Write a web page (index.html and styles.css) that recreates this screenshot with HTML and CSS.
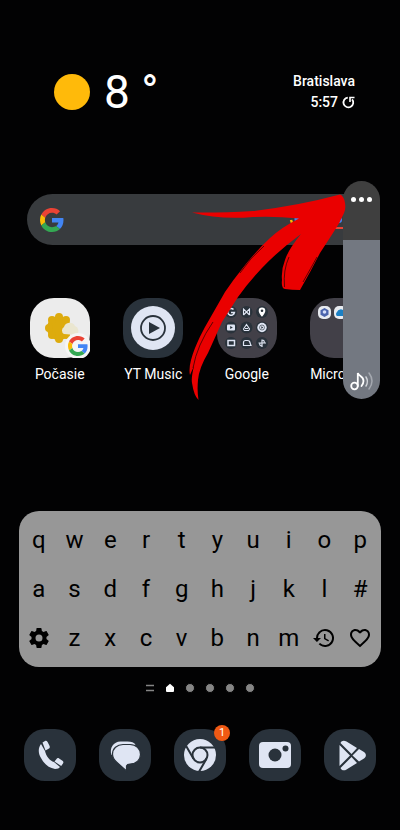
FILE: index.html
```
<!DOCTYPE html>
<html lang="sk">
<head>
    <meta charset="UTF-8">
    <meta name="viewport" content="width=device-width, initial-scale=1.0">
    <title>Domovská obrazovka</title>
    <link rel="stylesheet" href="styles.css">
</head>
<body>

<!-- Shared logo -->
<svg class="defs" width="0" height="0" aria-hidden="true">
    <symbol id="g-logo" viewBox="0 0 48 48">
        <path fill="#ea4335" d="M24 9.5c3.54 0 6.71 1.22 9.21 3.6l6.85-6.85C35.9 2.38 30.47 0 24 0 14.62 0 6.51 5.38 2.56 13.22l7.98 6.19C12.43 13.72 17.74 9.5 24 9.5z"/>
        <path fill="#4285f4" d="M46.98 24.55c0-1.57-.15-3.09-.38-4.55H24v9.02h12.94c-.58 2.96-2.26 5.48-4.78 7.18l7.73 6c4.51-4.18 7.09-10.36 7.09-17.65z"/>
        <path fill="#fbbc05" d="M10.53 28.59A14.5 14.5 0 0 1 9.77 24c0-1.6.27-3.14.76-4.59l-7.98-6.19A23.9 23.9 0 0 0 0 24c0 3.88.92 7.54 2.56 10.78l7.97-6.19z"/>
        <path fill="#34a853" d="M24 48c6.48 0 11.93-2.13 15.89-5.81l-7.73-6C30.01 37.64 27.24 38.5 24 38.5c-6.26 0-11.57-4.22-13.47-9.91l-7.98 6.19C6.51 42.62 14.62 48 24 48z"/>
    </symbol>
</svg>

<main class="home">
    <!-- Weather and clock -->
    <header class="weather">
        <span class="sun"></span>
        <span class="temp">8 °</span>
        <div class="place">
            <div>Bratislava</div>
            <div class="time">5:57
                <button class="refresh" aria-label="Obnoviť">
                    <svg viewBox="0 0 13 13" width="13" height="13" fill="none" stroke="#fff" stroke-width="1.8"><path d="M5.8 1.6a4.9 4.9 0 1 0 4.300 1.700"/><path d="M8 6V1.500M7.200 1.500H12.500" stroke-width="1.6"/></svg>
                </button>
            </div>
        </div>
    </header>

    <!-- Search bar -->
    <form class="search">
        <svg width="24" height="24"><use href="#g-logo"/></svg>
        <input type="text" aria-label="Hľadať">
        <button type="button" aria-label="Hlasové vyhľadávanie">
            <svg viewBox="0 0 24 24" width="24" height="24" fill="none" stroke-width="2.4">
                <rect x="9.5" y="5" width="5" height="9" rx="2.5" fill="#4285f4"/>
                <path d="M6 12a6 6 0 0 0 3 4.5" stroke="#fbbc05"/>
                <path d="M9 16.500A6.500 6.500 0 0 0 18 12" stroke="#ea4335"/>
                <path d="M12 18v3.500" stroke="#34a853"/>
            </svg>
        </button>
        <button type="button" aria-label="Vyhľadávanie obrázkom">
            <svg viewBox="0 0 24 24" width="24" height="24" fill="none" stroke-width="2">
                <path d="M3 10V7a3 3 0 0 1 3-3h4" stroke="#4285f4"/>
                <path d="M3 14v3a3 3 0 0 0 3 3h9" stroke="#ea4335"/>
                <circle cx="10" cy="12" r="3" fill="#4285f4"/>
            </svg>
        </button>
    </form>

    <!-- Apps -->
    <section class="apps">
        <button class="app">
            <span class="tile light">
                <svg viewBox="0 0 60 60" width="60" height="60">
                    <g fill="#ddab0d">
                        <circle cx="29" cy="30" r="12"/>
                        <circle cx="29" cy="19" r="4"/><circle cx="36" cy="22" r="4"/><circle cx="39" cy="30" r="4"/><circle cx="36" cy="37" r="4"/>
                        <circle cx="29" cy="41" r="4"/><circle cx="22" cy="37" r="4"/><circle cx="19" cy="30" r="4"/><circle cx="22" cy="22" r="4"/>
                    </g>
                    <path fill="#eae6d0" d="M34 36a4 4 0 0 1 0-7 6 6 0 0 1 11-1 5 5 0 0 1 1 9z"/>
                    <circle cx="48" cy="48" r="13" fill="#f5f5f5"/>
                    <use href="#g-logo" x="38" y="38" width="20" height="20"/>
                </svg>
            </span>
            <span class="label">Počasie</span>
        </button>
        <button class="app">
            <span class="tile dark">
                <svg viewBox="0 0 60 60" width="60" height="60">
                    <circle cx="30" cy="30" r="22" fill="#dfe5f3"/>
                    <circle cx="30" cy="30" r="12" fill="none" stroke="#29323b" stroke-width="1.800"/>
                    <path d="M26 24l11 6-11 6z" fill="#29323b"/>
                </svg>
            </span>
            <span class="label">YT Music</span>
        </button>
        <button class="app">
            <span class="tile folder">
                <svg viewBox="0 0 60 60" width="60" height="60">
                    <g fill="#29323b">
                        <circle cx="14" cy="14" r="6"/><circle cx="29.500" cy="14" r="6"/><circle cx="45" cy="14" r="6"/>
                        <circle cx="14" cy="29.500" r="6"/><circle cx="29.500" cy="29.500" r="6"/><circle cx="45" cy="29.500" r="6"/>
                        <circle cx="14" cy="45" r="6"/><circle cx="29.500" cy="45" r="6"/><circle cx="45" cy="45" r="6"/>
                    </g>
                    <g fill="none" stroke="#dfe5f3" stroke-width="1.500">
                        <path d="M16.500 11.500a3.400 3.400 0 1 0 .9 3H14"/>
                        <path stroke-width="1.100" d="M26.500 17v-6l3 3 3-3v6M26.500 17l3-3M32.500 17l-3-3"/>
                        <path stroke-width="1.100" d="M26.500 31l3-4.500 3 4.500a2 2 0 0 1-1 1.500h-4a2 2 0 0 1-1-1.500zM28 30.500h3"/>
                        <rect x="11" y="42.500" width="6.500" height="5"/>
                        <path stroke-width="1.200" d="M26.500 47.500v-3a2 2 0 0 1 2-2h2a2.500 2.500 0 0 1 2.500 2.500l1 2.500z"/>
                        <path stroke-width="1.200" d="M45 41.500V49M41.500 45H49M45 42q3 0 2 3M45 48q-3 0-2-3"/>
                    </g>
                    <path fill="#fff" fill-rule="evenodd" d="M45 9.500a3.300 3.300 0 0 1 3.300 3.300c0 2.500-3.300 6-3.300 6s-3.300-3.500-3.300-6A3.300 3.300 0 0 1 45 9.500zm0 2a1.300 1.300 0 1 0 0 2.600 1.300 1.300 0 0 0 0-2.600z"/>
                    <rect x="10" y="26.500" width="8" height="6" rx="1" fill="#dfe5f3"/>
                    <path d="M13.200 28l2.600 1.500-2.600 1.500z" fill="#29323b"/>
                    <circle cx="45" cy="29.500" r="4.700" fill="#dfe5f3"/>
                    <circle cx="45" cy="29.500" r="2.500" fill="none" stroke="#29323b" stroke-width=".6"/>
                    <path d="M44.300 28.300l2 1.200-2 1.200z" fill="#29323b"/>
                </svg>
            </span>
            <span class="label">Google</span>
        </button>
        <button class="app">
            <span class="tile folder">
                <svg viewBox="0 0 60 60" width="60" height="60">
                    <rect x="8" y="8" width="13" height="13" rx="5" fill="#e8ebf0"/>
                    <path d="M14.500 10l4 2.300v4.500l-4 2.300-4-2.300v-4.500z" fill="#4c65ad"/>
                    <circle cx="14.500" cy="14" r="1.800" fill="#d5defa"/>
                    <rect x="24" y="8" width="13" height="13" rx="5" fill="#e8ebf0"/>
                    <path d="M27 18a2.500 2.500 0 0 1 0-4 4 4 0 0 1 7-1 3 3 0 0 1 1 5z" fill="#1b80c4"/>
                </svg>
            </span>
            <span class="label">Microsoft</span>
        </button>
    </section>

    <!-- Letter search widget -->
    <section class="keys">
        <button>q</button><button>w</button><button>e</button><button>r</button><button>t</button>
        <button>y</button><button>u</button><button>i</button><button>o</button><button>p</button>
        <button>a</button><button>s</button><button>d</button><button>f</button><button>g</button>
        <button>h</button><button>j</button><button>k</button><button>l</button><button>#</button>
        <button aria-label="Nastavenia">
            <svg viewBox="0 0 24 24" width="24" height="24"><path d="M19.430 12.980c.04-.32.07-.64.07-.98s-.03-.66-.07-.98l2.110-1.650c.19-.15.24-.42.12-.64l-2-3.460c-.12-.22-.39-.3-.61-.22l-2.490 1c-.52-.4-1.080-.73-1.690-.98l-.38-2.650A.49.49 0 0 0 14 2h-4c-.25 0-.46.18-.49.42l-.38 2.650c-.61.25-1.170.59-1.690.98l-2.490-1c-.23-.09-.49 0-.61.22l-2 3.460c-.13.22-.07.49.12.64l2.110 1.650c-.04.32-.07.65-.07.98s.03.66.07.98l-2.110 1.650c-.19.15-.24.42-.12.64l2 3.460c.12.22.39.3.61.22l2.490-1c.52.4 1.080.73 1.690.98l.38 2.650c.03.24.24.42.49.42h4c.25 0 .46-.18.49-.42l.38-2.650c.61-.25 1.170-.59 1.690-.98l2.490 1c.23.09.49 0 .61-.22l2-3.460c.12-.22.07-.49-.12-.64l-2.110-1.650zM12 15.500a3.500 3.500 0 1 1 0-7 3.500 3.500 0 0 1 0 7z"/></svg>
        </button>
        <button>z</button><button>x</button><button>c</button><button>v</button>
        <button>b</button><button>n</button><button>m</button>
        <button aria-label="História">
            <svg viewBox="0 0 24 24" width="24" height="24"><path d="M13 3a9 9 0 0 0-9 9H1l3.890 3.890.07.14L9 12H6a7 7 0 1 1 2.060 4.940l-1.420 1.420A9 9 0 1 0 13 3zm-1 5v5l4.280 2.540.72-1.210-3.500-2.080V8H12z"/></svg>
        </button>
        <button aria-label="Obľúbené">
            <svg viewBox="0 0 24 24" width="24" height="24"><path d="M16.500 3c-1.740 0-3.410.81-4.500 2.090C10.910 3.810 9.240 3 7.500 3 4.420 3 2 5.420 2 8.500c0 3.780 3.400 6.860 8.550 11.540L12 21.350l1.450-1.320C18.600 15.360 22 12.280 22 8.500 22 5.420 19.580 3 16.500 3zm-4.400 15.550l-.1.1-.1-.1C7.140 14.240 4 11.390 4 8.500 4 6.500 5.500 5 7.500 5c1.540 0 3.040.99 3.570 2.360h1.870C13.460 5.990 14.960 5 16.500 5c2 0 3.500 1.500 3.500 3.500 0 2.890-3.140 5.740-7.900 10.050z"/></svg>
        </button>
    </section>

    <!-- Page indicator -->
    <div class="pages">
        <svg viewBox="0 0 10 10" width="10" height="10" stroke="#858585" stroke-width="1.500"><path d="M1 2.500h8M1 7.500h8"/></svg>
        <svg viewBox="0 0 10 10" width="10" height="10" fill="#fff"><path d="M5 .8l4 3.400V8a1 1 0 0 1-1 1H2a1 1 0 0 1-1-1V4.200z"/></svg>
        <span class="dot"></span>
        <span class="dot"></span>
        <span class="dot"></span>
        <span class="dot"></span>
    </div>

    <!-- Dock -->
    <nav class="dock">
        <button class="dock-app" aria-label="Telefón">
            <svg viewBox="0 0 52 52" width="52" height="52">
                <path fill="#dfe5f3" d="M17 15c-3 4-3 9 0 14 3 6 8 10 14 11 3 0 4-1 5-2l-6-5c-4-1-8-6-9-11z"/>
                <path fill="#dfe5f3" d="M18.500 13.500l2.500-1.500c1-.5 2 0 2.600 1l2 4c.4 1 .2 2-.6 2.600L21.500 21.500zM30.500 32.500l2-2.600c.7-.9 1.700-1 2.600-.4l3.400 2.200c1 .7 1.200 1.700.5 2.700l-1.800 2.700z"/>
            </svg>
        </button>
        <button class="dock-app" aria-label="Správy">
            <svg viewBox="0 0 52 52" width="52" height="52">
                <path fill="#dfe5f3" d="M12.500 26c-2.500-7 2-13.500 9-13.500h7c4 0 6.500 1.200 8 3z"/>
                <path fill="#dfe5f3" stroke="#29323b" stroke-width="1.200" d="M24 15.500h7c6 0 10.500 4 10.500 10 0 5-4 9.500-10.500 9.500-1.500 0-3 .5-3.500 2v5L17.500 33c-2.500-2.300-4-5-4-8 0-5.500 4.500-9.500 10.500-9.500z"/>
            </svg>
        </button>
        <button class="dock-app" aria-label="Chrome, 1 upozornenie">
            <svg viewBox="0 0 52 52" width="52" height="52">
                <circle cx="26" cy="26" r="16" fill="#dfe5f3"/>
                <g fill="none" stroke="#29323b" stroke-width="2">
                    <circle cx="26" cy="26" r="7.500"/>
                    <path d="M26 18.500h15M19.500 29.800L12 16.700M32.500 29.800L25 42.700"/>
                </g>
            </svg>
            <span class="badge">1</span>
        </button>
        <button class="dock-app" aria-label="Fotoaparát">
            <svg viewBox="0 0 52 52" width="52" height="52">
                <rect x="10" y="13" width="32" height="26" rx="4" fill="#dfe5f3"/>
                <circle cx="26" cy="26" r="6.500" fill="#29323b"/>
                <circle cx="36.500" cy="19.500" r="3" fill="#29323b"/>
            </svg>
        </button>
        <button class="dock-app" aria-label="Obchod Play">
            <svg viewBox="0 0 52 52" width="52" height="52">
                <path fill="#dfe5f3" d="M15.500 16v21l10.500-10.500zM16.500 14c1-2.500 3.500-3 6-1.500l10.500 6.500-5.500 6zM16.500 39c1 2.500 3.500 3 6 1.500l10.500-6.500-5.500-6zM35 20l5 3c2.500 1.500 2.500 5 0 6.500l-5 3-6.500-6z"/>
            </svg>
        </button>
    </nav>

    <!-- Volume panel -->
    <div class="volume">
        <input type="range" min="0" max="100" value="73" aria-label="Hlasitosť">
        <button class="more" aria-label="Ďalšie možnosti"><span></span><span></span><span></span></button>
        <svg class="note" viewBox="0 0 24 20" width="24" height="20" fill="none" stroke="#fff" stroke-width="1.800" stroke-linecap="round">
            <circle cx="4.500" cy="15" r="3.300"/>
            <path d="M7.800 15V2c1 3.500 5.700 3 5.700 8 0 2-.8 3.500-2 5"/>
            <path d="M16 6q2.800 4.500 0 9" stroke="#cfd2d7" stroke-width="1.500"/>
            <path d="M19 2q6 8 0 16" stroke="#a5a9b0" stroke-width="1.500"/>
        </svg>
    </div>

    <!-- Arrow pointing at the menu -->
    <svg class="arrow" viewBox="186 192 162 210" width="162" height="210" aria-hidden="true">
        <path fill="#ea0000" d="M192 212.500Q220 213 253 211Q297 206 340 194.500Q344 196 345 203Q346 209 344 213Q340 223 333 233L320 253Q311 271 300 290Q292 290 285 289Q281 288 282 280Q281 270 285 260Q288 250 301 234Q278 251 262 268Q248 283 238 297L222 322L208 353Q199 368 198 380Q197 391 198.500 400Q194 396 192 383Q191 378 194 366L190 375C187 363 198 340 205 327L225 292Q233 280 242 269Q255 252 270 238Q282 227 299 218.500Q275 216 253 217Q220 220 192 212.500z"/>
        <path fill="none" stroke="#3a0000" stroke-width=".8" d="M193 368Q197 345 213 322M240 273Q250 258 264 246M284.500 287Q283 270 289 257M303 282Q311 268 317 257"/>
    </svg>
</main>

</body>
</html>
```

FILE: styles.css
```
* {
    box-sizing: border-box;
}

body {
    margin: 0;
    background: #020203;
    color: #fff;
    font-family: Roboto, "Liberation Sans", sans-serif;
    font-size: 14px;
}

button {
    padding: 0;
    border: none;
    background: none;
    color: inherit;
    font: inherit;
    cursor: pointer;
}

svg {
    display: block;
}

.defs {
    position: absolute;
}

.home {
    position: relative;
    min-height: 100vh;
    padding-top: 68px;
}

/* Weather and clock */
.weather {
    display: flex;
    align-items: center;
    padding: 0 45px 0 54px;
}

.sun {
    width: 36px;
    height: 36px;
    margin-right: 14px;
    border-radius: 50%;
    background: #ffba0a;
}

.temp {
    font-size: 46px;
    line-height: 48px;
}

.place {
    margin-left: auto;
    font-weight: 500;
    line-height: 21px;
    text-align: right;
}

.time {
    display: flex;
    align-items: center;
    justify-content: flex-end;
    gap: 4px;
}

/* Search bar */
.search {
    display: flex;
    align-items: center;
    gap: 20px;
    height: 51px;
    margin: 78px 27px 0;
    padding: 0 20px 0 13px;
    border-radius: 26px;
    background: #383b3e;
}

.search input {
    flex: 1;
    min-width: 0;
    border: none;
    outline: none;
    background: none;
    color: #fff;
    font: inherit;
}

/* Apps */
.apps {
    display: grid;
    grid-template-columns: repeat(4, 1fr);
    margin: 53px 13px 0;
}

.app {
    display: flex;
    flex-direction: column;
    align-items: center;
    gap: 6px;
}

.tile {
    width: 60px;
    height: 60px;
    border-radius: 24px;
}

.light {
    background: #ececec;
}

.dark {
    background: #29323b;
}

.folder {
    background: #424048;
}

.label {
    line-height: 20px;
}

/* Letter search widget */
.keys {
    display: grid;
    grid-template-columns: repeat(10, 1fr);
    grid-auto-rows: 49px;
    margin: 127px 19px 0;
    padding: 4px 3px 5px 2px;
    border-radius: 20px;
    background: #979797;
    color: #000;
    font-size: 24px;
}

.keys svg {
    width: 24px;
    margin: 0 auto;
}

/* Page indicator */
.pages {
    display: flex;
    justify-content: center;
    gap: 10px;
    margin-top: 16px;
}

.dot {
    width: 10px;
    height: 10px;
    border: 1px solid #020203;
    border-radius: 50%;
    background: #858585;
}

/* Dock */
.dock {
    display: grid;
    grid-template-columns: repeat(5, 1fr);
    justify-items: center;
    margin: 36px 12px 0;
}

.dock-app {
    position: relative;
    width: 52px;
    height: 52px;
    border-radius: 21px;
    background: #29323b;
}

.badge {
    position: absolute;
    top: -4px;
    right: -4px;
    width: 16px;
    height: 16px;
    border-radius: 50%;
    background: #f05a14;
    font-size: 11px;
    line-height: 16px;
}

/* Volume panel */
.volume {
    position: absolute;
    top: 181px;
    right: 20px;
    width: 37px;
    height: 218px;
    border-radius: 19px;
    background: #3f3f3f;
    overflow: hidden;
}

.volume input {
    appearance: none;
    writing-mode: vertical-lr;
    direction: rtl;
    width: 100%;
    height: 100%;
    margin: 0;
    background: linear-gradient(to top, #737881 73%, #3f3f3f 73%);
}

.volume input::-webkit-slider-thumb {
    appearance: none;
    width: 37px;
    height: 1px;
    background: transparent;
}

.more {
    position: absolute;
    top: 8px;
    left: 0;
    display: flex;
    align-items: center;
    justify-content: center;
    gap: 3px;
    width: 100%;
    height: 20px;
}

.more span {
    width: 5px;
    height: 5px;
    border-radius: 50%;
    background: #fff;
}

.note {
    position: absolute;
    bottom: 8px;
    left: 7px;
}

/* Arrow pointing at the menu */
.arrow {
    position: absolute;
    top: 192px;
    right: 52px;
    pointer-events: none;
}
```
